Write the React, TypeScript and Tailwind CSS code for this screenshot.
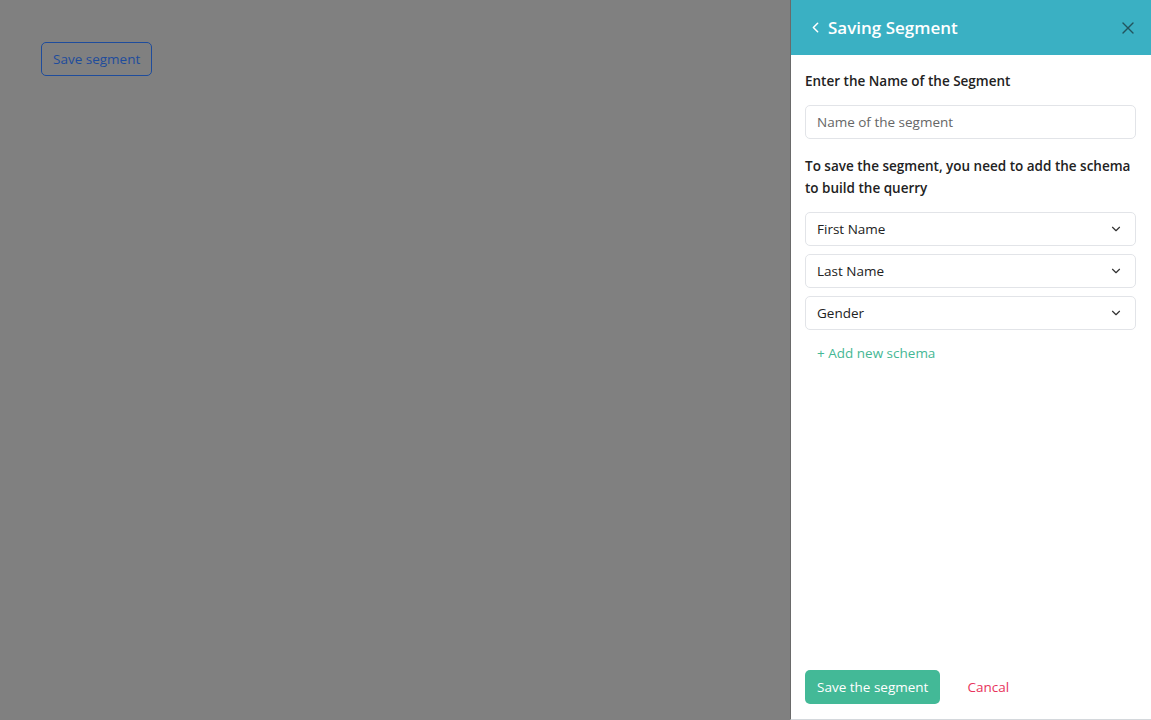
import { ChevronLeft, ChevronDown, X } from 'lucide-react';

const schemas = ['First Name', 'Last Name', 'Gender'];

export default function App() {
  return (
    <div className="flex h-[720px] w-full overflow-hidden bg-[#808080] font-['Open_Sans',sans-serif]">
      {/* page behind the overlay */}
      <div className="flex-1 px-[41px] pt-[42px]">
        <button className="h-[34px] rounded-[5px] border border-[#1e4c9c] px-[11px] text-[13.5px] text-[#1e4c9c]">
          Save segment
        </button>
      </div>

      {/* drawer */}
      <aside className="flex h-full w-[361px] flex-col border-l border-[#6a6a6a] border-b border-b-[#d4d8dc] bg-white">
        <header className="flex h-[55px] items-center justify-between bg-[#3ab0c3] pl-[16px] pr-[13px]">
          <div className="flex items-center gap-[4px] text-white">
            <ChevronLeft className="h-[17px] w-[17px]" strokeWidth={2.2} />
            <h2 className="text-[17px] font-semibold">Saving Segment</h2>
          </div>
          <X className="h-[20px] w-[20px] text-[#22545e]" strokeWidth={1.6} />
        </header>

        <div className="flex flex-1 flex-col pl-[14px] pr-[15px] pt-[16px]">
          <label className="text-[13.5px] font-semibold text-[#222]">Enter the Name of the Segment</label>
          <input
            placeholder="Name of the segment"
            className="mt-[14px] h-[34px] rounded-[5px] border border-[#e2e4e8] px-[11px] text-[13.5px] text-[#333] placeholder:text-[#666] outline-none"
          />
          <p className="mt-[16px] text-[13.5px] font-semibold leading-[22px] text-[#222]">
            To save the segment, you need to add the schema to build the querry
          </p>

          <div className="mt-[13px] flex flex-col gap-[8px]">
            {schemas.map((s) => (
              <div
                key={s}
                className="flex h-[34px] items-center justify-between rounded-[5px] border border-[#e2e4e8] pl-[11px] pr-[12px] text-[13.5px] text-[#222]"
              >
                <span>{s}</span>
                <ChevronDown className="h-[14px] w-[14px] text-[#333]" strokeWidth={2} />
              </div>
            ))}
          </div>

          <button className="mt-[13px] self-start pl-[12px] text-[13.5px] text-[#45b794]">+&nbsp;Add new schema</button>
        </div>

        <footer className="flex items-center gap-[27px] px-[14px] pb-[15px]">
          <button className="h-[34px] rounded-[5px] bg-[#43b997] px-[12px] text-[13.5px] text-white">
            Save the segment
          </button>
          <button className="text-[13.5px] text-[#e8335c]">Cancal</button>
        </footer>
      </aside>
    </div>
  );
}
